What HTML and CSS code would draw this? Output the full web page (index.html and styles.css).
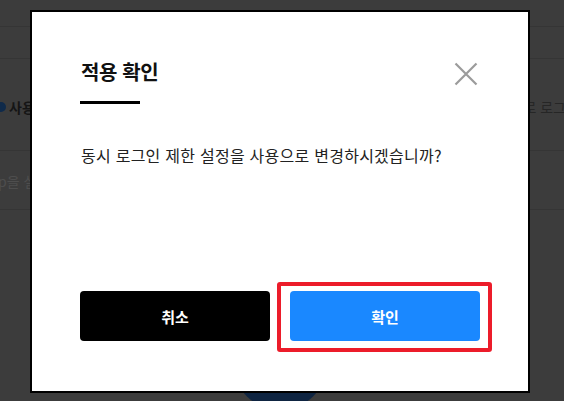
FILE: index.html
```html
<!DOCTYPE html>
<html lang="ko">
<head>
<meta charset="utf-8">
<title>적용 확인</title>
<link rel="stylesheet" href="styles.css">
</head>
<body>
<div class="page">
  <div class="bg-row bg-row-1"></div>
  <div class="bg-row bg-row-2"></div>
  <div class="bg-row bg-row-3">
    <span class="bg-left"><span class="bg-dot"></span>사용</span>
    <span class="bg-right">로 로그</span>
  </div>
  <div class="bg-row bg-row-4">
    <span class="bg-left-2">p을 설</span>
  </div>
  <div class="bg-row bg-row-5"></div>
  <div class="bg-circle"></div>

  <div class="modal">
    <div class="modal-head">
      <h2 class="modal-title">적용 확인</h2>
      <button class="modal-close" type="button" aria-label="닫기">
        <svg width="24" height="24" viewBox="0 0 24 24">
          <path d="M1.5 1.5 L22.5 22.5 M22.5 1.5 L1.5 22.5" stroke="#9b9b9b" stroke-width="2.2" fill="none"/>
        </svg>
      </button>
    </div>
    <p class="modal-msg">동시 로그인 제한 설정을 사용으로 변경하시겠습니까?</p>
    <div class="modal-actions">
      <button class="btn btn-cancel" type="button">취소</button>
      <button class="btn btn-ok" type="button">확인</button>
    </div>
  </div>
</div>
</body>
</html>
```

FILE: styles.css
```css
* { box-sizing: border-box; }
html, body {
  margin: 0;
  padding: 0;
}
body {
  width: 564px;
  height: 401px;
  overflow: hidden;
  background: #3c3c3c;
  font-family: "Noto Sans CJK KR", "Noto Sans", sans-serif;
}
.page {
  position: relative;
  width: 564px;
  height: 401px;
  background: #3c3c3c;
}
.bg-row {
  border-bottom: 1px solid #353535;
  position: relative;
}
.bg-row-1 { height: 27px; }
.bg-row-2 { height: 32px; }
.bg-row-3 {
  height: 92px;
  display: flex;
  justify-content: space-between;
  align-items: center;
  padding-top: 5px;
}
.bg-row-4 {
  height: 59px;
  display: flex;
  align-items: center;
  padding-top: 1px;
}
.bg-row-5 { border-bottom: none; }
.bg-left {
  display: flex;
  align-items: center;
  gap: 3px;
  margin-left: -4px;
  font-size: 14px;
  font-weight: 700;
  color: #151515;
}
.bg-dot {
  width: 10px;
  height: 10px;
  border-radius: 50%;
  background: #0f2a4a;
}
.bg-right {
  font-size: 14px;
  color: #262626;
  margin-right: -2px;
}
.bg-left-2 {
  font-size: 14px;
  color: #4e4e4e;
  margin-left: -2px;
}
.bg-circle {
  position: absolute;
  left: 233px;
  top: 316px;
  width: 94px;
  height: 94px;
  border-radius: 50%;
  background: #0e2441;
}

.modal {
  position: absolute;
  left: 30px;
  top: 10px;
  width: 500px;
  height: 383px;
  background: #fff;
  border: 2px solid #000;
  padding: 46px 48px 50px;
  display: flex;
  flex-direction: column;
}
.modal-head {
  display: flex;
  justify-content: space-between;
  align-items: flex-start;
}
.modal-title {
  margin: 0 0 0 1px;
  font-size: 20px;
  line-height: 28px;
  font-weight: 700;
  color: #111;
  letter-spacing: -0.4px;
}
.modal-title::after {
  content: "";
  display: block;
  width: 60px;
  height: 3px;
  background: #000;
  margin-top: 15px;
  margin-left: -1px;
}
.modal-close {
  border: 0;
  background: none;
  padding: 0;
  margin: 4px 2px 0 0;
  width: 24px;
  height: 24px;
  cursor: pointer;
}
.modal-close svg { display: block; }
.modal-msg {
  margin: 40px 0 0 1px;
  font-size: 16px;
  line-height: 22px;
  color: #222;
  letter-spacing: 0.25px;
}
.modal-actions {
  margin-top: auto;
  display: flex;
  gap: 20px;
}
.btn {
  flex: 1;
  height: 50px;
  border: 0;
  border-radius: 4px;
  color: #fff;
  font-family: "Noto Sans CJK KR", "Noto Sans", sans-serif;
  font-size: 15px;
  font-weight: 700;
  cursor: pointer;
}
.btn-cancel { background: #000; }
.btn-ok {
  background: #1a88ff;
  position: relative;
}
.btn-ok::after {
  content: "";
  position: absolute;
  left: -13px;
  right: -12px;
  top: -9px;
  bottom: -11px;
  border: 4px solid #ec1c2a;
  border-radius: 3px;
  pointer-events: none;
}
```
